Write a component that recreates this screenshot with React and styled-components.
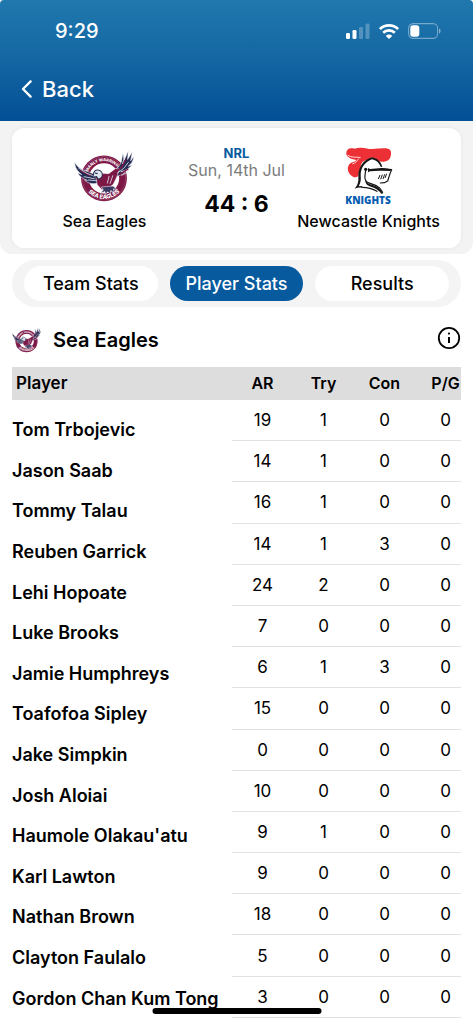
import React, { useId } from "react";
import styled, { createGlobalStyle } from "styled-components";

const GlobalStyle = createGlobalStyle`
  * { box-sizing: border-box; }
  body {
    margin: 0;
    background: #fff;
    color: #000;
    font-family: Inter, "Liberation Sans", sans-serif;
  }
  button { font: inherit; border: 0; cursor: pointer; }
`;

const Page = styled.div`
  display: flex;
  flex-direction: column;
`;

const Header = styled.header`
  height: 121px;
  border-radius: 4px 4px 0 0;
  background: linear-gradient(#2078ae, #1568a3 45%, #034f96);
  color: #fff;
`;

const StatusBar = styled.div`
  display: flex;
  align-items: center;
  justify-content: space-between;
  height: 62px;
  padding: 0 32px 0 55px;
`;

const Clock = styled.time`
  font-size: 20px;
  line-height: 24px;
  font-weight: 500;
`;

const StatusIcons = styled.div`
  display: flex;
  align-items: center;
  gap: 9px;
`;

const BackButton = styled.button`
  display: flex;
  align-items: center;
  gap: 9px;
  margin-left: 21px;
  padding: 14px 0;
  background: none;
  color: #fff;
  font-size: 22px;
  line-height: 26px;
  font-weight: 500;
`;

const MatchArea = styled.section`
  padding: 7px 12px 6px;
  border-radius: 0 0 12px 12px;
  background: #f3f3f3;
`;

const MatchCard = styled.div`
  display: grid;
  grid-template-columns: minmax(0, 7fr) minmax(0, 3fr) minmax(0, 7fr);
  height: 120px;
  border-radius: 12px;
  background: #fff;
  box-shadow: 0 0 4px rgba(0, 0, 0, 0.06);
`;

const Team = styled.div`
  display: flex;
  flex-direction: column;
  align-items: center;
  gap: 4px;
  padding-top: 17px;
  font-size: 16px;
  line-height: 20px;
  font-weight: 500;
  white-space: nowrap;
`;

const MatchInfo = styled.div`
  display: flex;
  flex-direction: column;
  align-items: center;
  padding-top: 17px;
  white-space: nowrap;
`;

const League = styled.div`
  color: #075a9e;
  font-size: 13px;
  line-height: 16px;
  font-weight: 700;
`;

const MatchDate = styled.div`
  color: #7c7c7c;
  font-size: 16px;
  line-height: 18px;
`;

const Score = styled.div`
  margin-top: 12px;
  font-size: 23px;
  line-height: 26px;
  font-weight: 700;
`;

const Tabs = styled.nav`
  display: grid;
  grid-template-columns: repeat(3, 1fr);
  gap: 12px;
  margin: 6px 12px 0;
  padding: 6px 12px;
  border-radius: 24px;
  background: #f4f4f4;
`;

const Tab = styled.button`
  height: 35px;
  padding: 0;
  border-radius: 18px;
  background: ${(p) => (p.$active ? "#075a9e" : "#fff")};
  color: ${(p) => (p.$active ? "#fff" : "#000")};
  font-size: 18px;
  font-weight: 500;
  white-space: nowrap;
`;

const TeamHeading = styled.div`
  display: flex;
  align-items: center;
  gap: 12px;
  height: 60px;
  padding: 6px 12px 0;
`;

const TeamName = styled.h2`
  flex: 1;
  margin: 0;
  font-size: 20px;
  line-height: 24px;
  font-weight: 600;
`;

const InfoButton = styled.button`
  display: flex;
  padding: 0 0 4px;
  background: none;
`;

const StatsPanel = styled.section`
  display: grid;
  grid-template-columns: 49fr 51fr;
  align-items: start;
  padding: 0 12px 6px;
`;

const Scroller = styled.div`
  overflow-x: auto;
  scrollbar-width: none;
`;

const Table = styled.table`
  border-spacing: 0;
  line-height: 20px;
  white-space: nowrap;
`;

const NamesTable = styled(Table)`
  width: 100%;
  height: 642px;
  font-size: 18px;
`;

const StatsTable = styled(Table)`
  width: 244px;
  height: 651px;
  table-layout: fixed;
  font-size: 17px;
`;

const ColumnHead = styled.th`
  height: 33px;
  padding: 0 ${(p) => (p.$left ? "4px" : "0")} 2px;
  background: #ddd;
  font-size: ${(p) => (p.$left ? "17px" : "16px")};
  font-weight: 600;
  text-align: ${(p) => (p.$left ? "left" : "center")};
`;

const NameCell = styled.th`
  padding: 20px 0 0;
  font-weight: 600;
  text-align: left;
`;

const StatCell = styled.td`
  padding: 0;
  border-bottom: 1px solid #e2e2e2;
  text-align: center;
`;

const HomeIndicator = styled.div`
  position: fixed;
  bottom: 10px;
  left: 50%;
  width: 169px;
  height: 6px;
  border-radius: 3px;
  background: #000;
  transform: translateX(-50%);
`;

function SignalIcon() {
  return (
    <svg width="24" height="16" viewBox="0 0 24 16" fill="#fff" aria-hidden="true">
      <rect x="0" y="10" width="4" height="6" rx="1.3" />
      <rect x="6.5" y="7" width="4" height="9" rx="1.3" />
      <rect x="13" y="4" width="4" height="12" rx="1.3" opacity=".25" />
      <rect x="19.5" y="0.5" width="4" height="15.5" rx="1.3" opacity=".25" />
    </svg>
  );
}

function WifiIcon() {
  return (
    <svg width="20" height="15" viewBox="0 0 20 15" fill="none" stroke="#fff" strokeWidth="2.7" aria-hidden="true">
      <path d="M.9 5.1a13 13 0 0 1 18.2 0" />
      <path d="M4.2 8.8a8.3 8.3 0 0 1 11.6 0" />
      <path d="M10 15 6.8 11.9a4.5 4.5 0 0 1 6.4 0z" fill="#fff" stroke="none" />
    </svg>
  );
}

function BatteryIcon() {
  return (
    <svg width="33" height="16" viewBox="0 0 33 16" aria-hidden="true">
      <rect x=".6" y=".6" width="29" height="14.8" rx="4.6" fill="none" stroke="#fff" strokeOpacity=".4" strokeWidth="1.1" />
      <rect x="2.3" y="2.3" width="9" height="11.4" rx="2.6" fill="#fff" />
      <path d="M31 5.4c2.1.9 2.1 4.3 0 5.2z" fill="#fff" fillOpacity=".45" />
    </svg>
  );
}

function ChevronLeft() {
  return (
    <svg width="12" height="18" viewBox="0 0 12 18" fill="none" stroke="#fff" strokeWidth="2.3" strokeLinecap="round" strokeLinejoin="round" aria-hidden="true">
      <path d="M9.6 1.4 2 9l7.6 7.6" />
    </svg>
  );
}

function InfoIcon() {
  return (
    <svg width="24" height="24" viewBox="0 0 24 24" fill="none" stroke="#000" strokeWidth="1.8" aria-hidden="true">
      <circle cx="12" cy="12" r="10.2" />
      <path d="M12 11v6" strokeWidth="2" />
      <circle cx="12" cy="7.6" r="1.1" fill="#000" stroke="none" />
    </svg>
  );
}

function EaglesLogo({ width, height }) {
  const id = useId();
  return (
    <svg width={width} height={height} viewBox="0 0 178 150" aria-hidden="true">
      <defs>
        <path id={id + "t"} d="M37 83a52 52 0 0 1 104 0" />
        <path id={id + "b"} d="M26 80a63 63 0 0 0 126 0" />
      </defs>
      <circle cx="89" cy="82" r="68" fill="#7c1746" />
      <circle cx="89" cy="82" r="64" fill="none" stroke="#b9708f" strokeWidth="1.2" />
      <circle cx="89" cy="82" r="45" fill="#fff" />
      <g fill="#fff" fontFamily="Inter, sans-serif" fontWeight="800" textAnchor="middle">
        <text fontSize="12">
          <textPath href={"#" + id + "t"} startOffset="50%">MANLY WARRINGAH</textPath>
        </text>
        <text fontSize="17">
          <textPath href={"#" + id + "b"} startOffset="50%">SEA EAGLES</textPath>
        </text>
      </g>
      <g stroke="#fff" strokeWidth="1.6" strokeLinejoin="round">
        <path fill="#262d55" d="M74 94C58 101 42 98 31 87l9 1C26 83 15 75 11 65l12 6C10 61 2 49 2 34c8 15 20 22 36 27 12 3 22 9 30 15z" />
        <path fill="#262d55" d="M107 66c16-6 27-18 33-32L145 7l4 21 12-28-2 26 14-23-5 27 9-13c-1 15-8 23-16 29l12-4c-10 12-21 17-34 20l14 1c-14 11-25 14-39 14z" />
        <path fill="#7c1746" d="m64 76 18-9 21 1 20-15 12 1-8 24-10 21-14 13-20 4-14-15z" />
        <path fill="#3c3a63" d="m81 108 15-2 20-1 13 11-12-3 3 11-11-6-1 11-8-7-7 8-1-9-13 5 8-10z" />
      </g>
      <path fill="none" stroke="#7c1746" strokeWidth="4" strokeLinecap="round" d="m126 62 17-15 10-20M136 70l24-15M20 59l28 14" />
      <g fill="none" stroke="#e4ebf1" strokeWidth="2.4" strokeLinecap="round">
        <path d="m14 52 24 15 26 10M30 77l30 6M43 87l24 2" />
        <path d="m129 66 19-14 13-17M144 38l6-19M142 73l20-11M104 76l-5 20M115 74l-8 23" />
      </g>
      <path fill="#dfe7ed" stroke="#262d55" strokeWidth="3" d="M72 57c-9-1-15 6-14 14l-4 8 13-2 5 8 10-6c5-12 0-20-10-22z" />
      <path d="m62 66 8 2" stroke="#262d55" strokeWidth="3.5" />
    </svg>
  );
}

function KnightsLogo() {
  return (
    <svg width="54" height="62" viewBox="0 0 162 186" aria-hidden="true">
      <path
        fill="#ed3035"
        d="M13 24C14 10 26 8 38 11c14-5 25-2 39 0 17 2 34-1 51-1 14 0 21 6 19 18-1 13-8 21-21 22-16 1-30-7-46-6-10 0-17 4-21 11-5 9-1 17-4 28-3 11-13 17-22 12-15-7-20-26-11-37 6-8 17-6 21-13-9-3-18-3-24-9-5-4-7-7-6-12z"
      />
      <path fill="none" stroke="#fff" strokeWidth="2.4" d="M17 30c10 9 26 5 39 8M31 57c9-3 14-8 19-16" />
      <path
        fill="#fff"
        stroke="#fff"
        strokeWidth="9"
        strokeLinejoin="round"
        d="M89 42c-25 11-37 32-35 62 0 13-3 20-9 25 20-4 42 0 60 12l11-25 18-4 12-36-25-6c-5-13-15-24-32-28z"
      />
      <path
        fill="#171717"
        d="M90 37C63 45 48 67 49 96c1 17-3 25-11 35 8-3 15-4 23-3l-1-5-10 1c7-11 7-21 6-33 0-22 11-38 34-48 13 3 21 10 26 22l5 1C117 49 106 40 90 37z"
      />
      <path fill="none" stroke="#171717" strokeWidth="3.5" strokeLinecap="round" strokeLinejoin="round" d="M71 76c-2 16-6 28 5 36l25 9 12 8 9 13M60 127c18 0 32 4 45 12M118 71l31 3-4 9-8 25-10 5-12 1" />
      <path fill="#171717" d="m78 69 6 3 34-3 31 4-4 5-31-1-30 2-6 3z" />
      <circle cx="71" cy="73" r="5" fill="#171717" />
      <path fill="none" stroke="#171717" strokeWidth="3" d="m114 90-5 12m12-13-5 14m12-15-5 14m11-16-5 13" />
      <path fill="#171717" d="M70 104c3 10 11 12 22 16 16 5 22 10 31 25l-4 2c-10-13-20-19-32-22-10-3-18-9-17-21z" />
      <text x="78" y="176" fill="#075db0" fontFamily="Open Sans, sans-serif" fontSize="30" fontWeight="800" textAnchor="middle">
        KNIGHTS
      </text>
    </svg>
  );
}

const columns = ["AR", "Try", "Con", "P/G"];

const players = [
  ["Tom Trbojevic", 19, 1, 0, 0],
  ["Jason Saab", 14, 1, 0, 0],
  ["Tommy Talau", 16, 1, 0, 0],
  ["Reuben Garrick", 14, 1, 3, 0],
  ["Lehi Hopoate", 24, 2, 0, 0],
  ["Luke Brooks", 7, 0, 0, 0],
  ["Jamie Humphreys", 6, 1, 3, 0],
  ["Toafofoa Sipley", 15, 0, 0, 0],
  ["Jake Simpkin", 0, 0, 0, 0],
  ["Josh Aloiai", 10, 0, 0, 0],
  ["Haumole Olakau'atu", 9, 1, 0, 0],
  ["Karl Lawton", 9, 0, 0, 0],
  ["Nathan Brown", 18, 0, 0, 0],
  ["Clayton Faulalo", 5, 0, 0, 0],
  ["Gordon Chan Kum Tong", 3, 0, 0, 0],
];

export default function App() {
  return (
    <Page>
      <GlobalStyle />
      <Header>
        <StatusBar>
          <Clock>9:29</Clock>
          <StatusIcons>
            <SignalIcon />
            <WifiIcon />
            <BatteryIcon />
          </StatusIcons>
        </StatusBar>
        <BackButton type="button">
          <ChevronLeft />
          Back
        </BackButton>
      </Header>
      <main>
        <MatchArea>
          <MatchCard>
            <Team>
              <EaglesLogo width={60} height={62} />
              Sea Eagles
            </Team>
            <MatchInfo>
              <League>NRL</League>
              <MatchDate>Sun, 14th Jul</MatchDate>
              <Score>44 : 6</Score>
            </MatchInfo>
            <Team>
              <KnightsLogo />
              Newcastle Knights
            </Team>
          </MatchCard>
        </MatchArea>
        <Tabs>
          <Tab type="button">Team Stats</Tab>
          <Tab type="button" $active aria-current="page">Player Stats</Tab>
          <Tab type="button">Results</Tab>
        </Tabs>
        <TeamHeading>
          <EaglesLogo width={29} height={26} />
          <TeamName>Sea Eagles</TeamName>
          <InfoButton type="button" aria-label="Stat descriptions">
            <InfoIcon />
          </InfoButton>
        </TeamHeading>
        <StatsPanel>
          <NamesTable aria-label="Players">
            <thead>
              <tr>
                <ColumnHead scope="col" $left>Player</ColumnHead>
              </tr>
            </thead>
            <tbody>
              {players.map(([name]) => (
                <tr key={name}>
                  <NameCell scope="row">{name}</NameCell>
                </tr>
              ))}
            </tbody>
          </NamesTable>
          <Scroller>
            <StatsTable aria-label="Player stats">
              <thead>
                <tr>
                  {columns.map((c) => (
                    <ColumnHead key={c} scope="col">{c}</ColumnHead>
                  ))}
                </tr>
              </thead>
              <tbody>
                {players.map(([name, ...stats]) => (
                  <tr key={name}>
                    {stats.map((value, i) => (
                      <StatCell key={columns[i]}>{value}</StatCell>
                    ))}
                  </tr>
                ))}
              </tbody>
            </StatsTable>
          </Scroller>
        </StatsPanel>
      </main>
      <HomeIndicator />
    </Page>
  );
}
